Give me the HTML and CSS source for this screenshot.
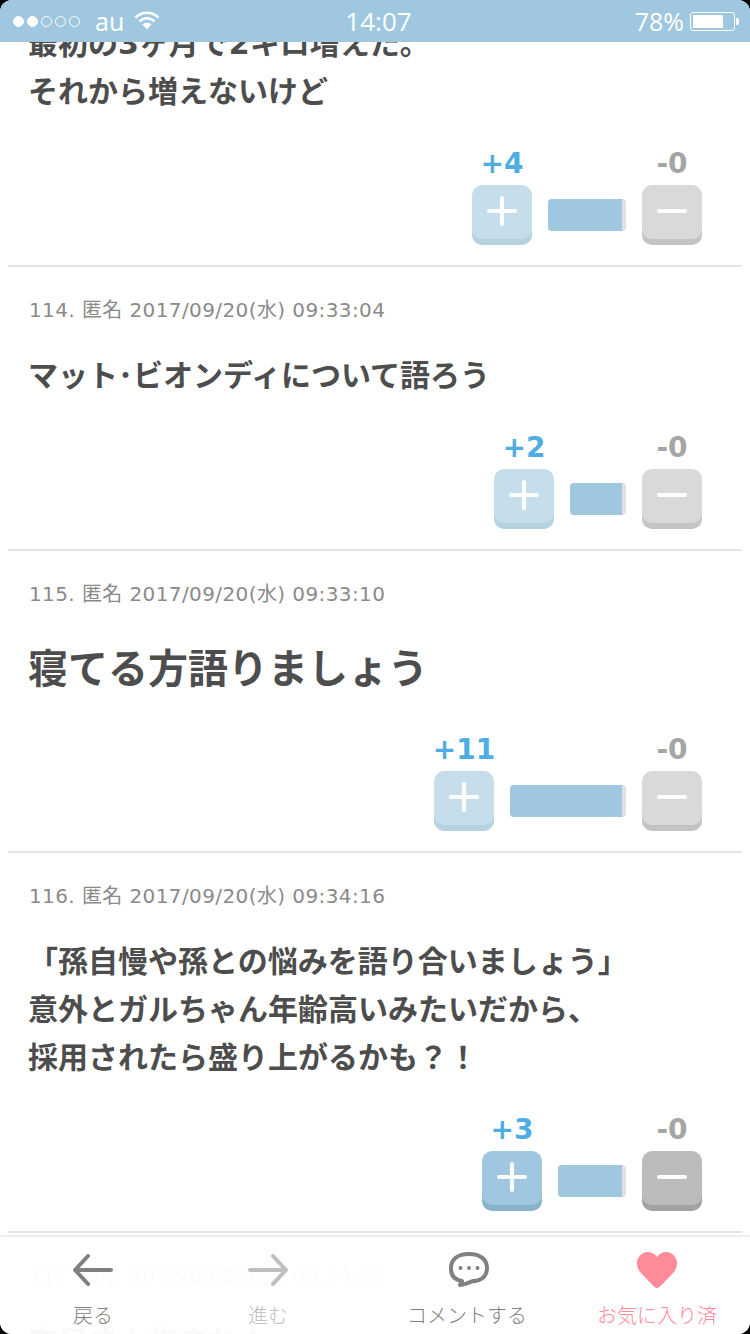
FILE: index.html
```html
<!DOCTYPE html>
<html lang="ja">
<head>
  <meta charset="UTF-8">
  <title>コメント</title>
  <link rel="stylesheet" href="styles.css">
</head>
<body>
<div class="screen">

  <div class="status-bar">
    <div class="status-left">
      <span class="signal">
        <i class="dot on"></i><i class="dot on"></i><i class="dot"></i><i class="dot"></i><i class="dot"></i>
      </span>
      <span class="carrier">au</span>
      <svg class="wifi" width="26" height="20" viewBox="0 0 26 20">
        <path d="M1.5 7.5C8 1 18 1 24.500 7.5" fill="none" stroke="#fff" stroke-width="2.500"/>
        <path d="M5.500 11.500C10 7.200 16 7.200 20.500 11.500" fill="none" stroke="#fff" stroke-width="2.500"/>
        <path d="M13 19.500L8.500 14.500C11 12.300 15 12.300 17.500 14.500Z" fill="#fff"/>
      </svg>
    </div>
    <div class="status-time">14:07</div>
    <div class="status-right">
      <span>78%</span>
      <span class="battery"><span class="battery-level"></span></span>
      <span class="battery-tip"></span>
    </div>
  </div>

  <div class="comments">

    <div class="comment">
      <p class="comment-body">最初の3ヶ月で2キロ増えた。<br>それから増えないけど</p>
      <div class="votes">
        <div class="vote plus">
          <span class="count">+4</span>
          <button class="vote-btn"><svg width="30" height="30" viewBox="0 0 30 30"><path d="M2 15H28M15 2V28" stroke="#fff" stroke-width="4" stroke-linecap="round"/></svg></button>
        </div>
        <div class="bar" style="width:78px"><div class="bar-fill"></div></div>
        <div class="vote minus">
          <span class="count">-0</span>
          <button class="vote-btn"><svg width="30" height="30" viewBox="0 0 30 30"><path d="M2 15H28" stroke="#fff" stroke-width="4" stroke-linecap="round"/></svg></button>
        </div>
      </div>
    </div>

    <div class="comment">
      <div class="comment-meta">114. 匿名 2017/09/20(水) 09:33:04</div>
      <p class="comment-body">マット･ビオンディについて語ろう</p>
      <div class="votes">
        <div class="vote plus">
          <span class="count">+2</span>
          <button class="vote-btn"><svg width="30" height="30" viewBox="0 0 30 30"><path d="M2 15H28M15 2V28" stroke="#fff" stroke-width="4" stroke-linecap="round"/></svg></button>
        </div>
        <div class="bar" style="width:56px"><div class="bar-fill"></div></div>
        <div class="vote minus">
          <span class="count">-0</span>
          <button class="vote-btn"><svg width="30" height="30" viewBox="0 0 30 30"><path d="M2 15H28" stroke="#fff" stroke-width="4" stroke-linecap="round"/></svg></button>
        </div>
      </div>
    </div>

    <div class="comment">
      <div class="comment-meta">115. 匿名 2017/09/20(水) 09:33:10</div>
      <p class="comment-body large">寝てる方語りましょう</p>
      <div class="votes">
        <div class="vote plus">
          <span class="count">+11</span>
          <button class="vote-btn"><svg width="30" height="30" viewBox="0 0 30 30"><path d="M2 15H28M15 2V28" stroke="#fff" stroke-width="4" stroke-linecap="round"/></svg></button>
        </div>
        <div class="bar" style="width:116px"><div class="bar-fill"></div></div>
        <div class="vote minus">
          <span class="count">-0</span>
          <button class="vote-btn"><svg width="30" height="30" viewBox="0 0 30 30"><path d="M2 15H28" stroke="#fff" stroke-width="4" stroke-linecap="round"/></svg></button>
        </div>
      </div>
    </div>

    <div class="comment">
      <div class="comment-meta">116. 匿名 2017/09/20(水) 09:34:16</div>
      <p class="comment-body">「孫自慢や孫との悩みを語り合いましょう」<br>意外とガルちゃん年齢高いみたいだから、<br>採用されたら盛り上がるかも？！</p>
      <div class="votes">
        <div class="vote plus voted">
          <span class="count">+3</span>
          <button class="vote-btn"><svg width="30" height="30" viewBox="0 0 30 30"><path d="M2 15H28M15 2V28" stroke="#fff" stroke-width="4" stroke-linecap="round"/></svg></button>
        </div>
        <div class="bar" style="width:68px"><div class="bar-fill"></div></div>
        <div class="vote minus voted">
          <span class="count">-0</span>
          <button class="vote-btn"><svg width="30" height="30" viewBox="0 0 30 30"><path d="M2 15H28" stroke="#fff" stroke-width="4" stroke-linecap="round"/></svg></button>
        </div>
      </div>
    </div>

    <div class="comment">
      <div class="comment-meta">117. 匿名 2017/09/20(水) 09:34:22</div>
      <p class="comment-body">在日さん集まれ！</p>
    </div>

  </div>

  <div class="tab-bar">
    <div class="tab">
      <svg width="44" height="36" viewBox="0 0 44 36"><path d="M40 18H4M17 4L4 18L17 32" fill="none" stroke="#808080" stroke-width="4" stroke-linecap="round" stroke-linejoin="round"/></svg>
      <span>戻る</span>
    </div>
    <div class="tab disabled">
      <svg width="44" height="36" viewBox="0 0 44 36"><path d="M4 18H40M27 4L40 18L27 32" fill="none" stroke="#808080" stroke-width="4" stroke-linecap="round" stroke-linejoin="round"/></svg>
      <span>進む</span>
    </div>
    <div class="tab">
      <svg width="44" height="36" viewBox="-2 0 44 36"><path d="M13 33L15 29C8 28 4 23.500 4 16.500C4 7.500 10.500 2 22 2C33.500 2 40 7.500 40 16C40 25 33.500 29 25 29.300C21 31 17 32.500 13 33Z" fill="none" stroke="#808080" stroke-width="4" stroke-linejoin="round"/><circle cx="13.500" cy="16" r="2" fill="#808080"/><circle cx="22" cy="16" r="2" fill="#808080"/><circle cx="30.500" cy="16" r="2" fill="#808080"/></svg>
      <span>コメントする</span>
    </div>
    <div class="tab favorite">
      <svg width="44" height="36" viewBox="0 0 44 36"><path d="M22 36C20.500 36 19.500 35 18 33.500L6 21C3.500 18.500 2 15 2 11C2 5 7 0 12.500 0C16.500 0 19.500 1.500 22 5C24.500 1.500 27.500 0 31.500 0C37 0 42 5 42 11C42 15 40.500 18.500 38 21L26 33.500C24.500 35 23.500 36 22 36Z" fill="#ff8b9a"/></svg>
      <span>お気に入り済</span>
    </div>
  </div>

</div>
</body>
</html>
```

FILE: styles.css
```css
html, body {
  margin: 0;
  padding: 0;
  background: #000;
}

.screen {
  position: relative;
  width: 750px;
  height: 1334px;
  overflow: hidden;
  background: #fff;
  border-radius: 12px;
  font-family: "Noto Sans CJK JP", "DejaVu Sans", sans-serif;
}

/* status bar */
.status-bar {
  position: absolute;
  top: 0;
  left: 0;
  right: 0;
  z-index: 2;
  height: 42px;
  background: #9fc8e0;
  color: #fff;
  font-family: "Open Sans", sans-serif;
  font-size: 25px;
  display: flex;
  align-items: center;
  justify-content: space-between;
  padding: 0 11px 0 13px;
  box-sizing: border-box;
}

.status-left, .status-right {
  display: flex;
  align-items: center;
  width: 200px;
}

.status-right {
  justify-content: flex-end;
}

.signal {
  display: flex;
  gap: 3px;
}

.dot {
  width: 11px;
  height: 11px;
  box-sizing: border-box;
  border: 1px solid #fff;
  border-radius: 50%;
}

.dot.on {
  background: #fff;
}

.carrier {
  margin-left: 15px;
}

.wifi {
  margin-left: 10px;
  margin-bottom: 2px;
}

.status-time {
  font-size: 26px;
  margin-left: 5px;
}

.battery {
  display: block;
  width: 45px;
  height: 19px;
  margin-left: 6px;
  padding: 2px;
  box-sizing: border-box;
  border: 1px solid #fff;
  border-radius: 3px;
}

.battery-level {
  display: block;
  width: 78%;
  height: 100%;
  background: #fff;
}

.battery-tip {
  width: 3px;
  height: 7px;
  margin-left: 1px;
  background: #fff;
  border-radius: 0 2px 2px 0;
}

/* comments */
.comments {
  margin-top: -8px;
  padding: 0 8px;
}

.comment {
  border-bottom: 2px solid #e4e4e4;
  padding: 0 40px 20px 21px;
}

.comment:last-child {
  border-bottom: none;
}

.comment-meta {
  height: 28px;
  padding-top: 29px;
  line-height: 28px;
  font-size: 20px;
  letter-spacing: 0.4px;
  color: #8a8a8a;
  font-family: "DejaVu Sans", "Noto Sans CJK JP", sans-serif;
}

.comment-body {
  margin: 28px 0 0 -1px;
  font-family: "DejaVu Sans", "Noto Sans CJK JP", sans-serif;
  font-size: 30px;
  line-height: 48px;
  font-weight: bold;
  color: #4d4d4d;
}

.comment-body.large {
  font-size: 40px;
  line-height: 66px;
}

.votes {
  display: flex;
  justify-content: flex-end;
  align-items: flex-end;
  gap: 16px;
  margin-top: 31px;
}

.vote {
  width: 60px;
  display: flex;
  flex-direction: column;
  align-items: center;
}

.count {
  font-family: "DejaVu Sans", sans-serif;
  font-size: 28px;
  font-weight: bold;
  line-height: 34px;
  margin-bottom: 4px;
  white-space: nowrap;
}

.plus .count {
  color: #4eaee4;
}

.minus .count {
  color: #a5a5a5;
}

.vote-btn {
  width: 60px;
  height: 54px;
  margin-bottom: 6px;
  padding: 0 0 2px;
  border: none;
  border-radius: 10px;
  display: flex;
  align-items: center;
  justify-content: center;
}

.plus .vote-btn {
  background: #c6deeb;
  box-shadow: 0 6px 0 #b5d2e1;
}

.minus .vote-btn {
  background: #d9d9d9;
  box-shadow: 0 6px 0 #c4c4c4;
}

.plus.voted .vote-btn {
  background: #9fc8e0;
  box-shadow: 0 6px 0 #87b3cc;
}

.minus.voted .vote-btn {
  background: #bcbcbc;
  box-shadow: 0 6px 0 #a3a3a3;
}

.bar {
  height: 32px;
  margin-bottom: 14px;
  background: #e0e0e0;
  border-radius: 4px;
  overflow: hidden;
}

.bar-fill {
  height: 100%;
  margin-right: 4px;
  background: #9fc8e0;
}

/* bottom tabs */
.tab-bar {
  position: absolute;
  left: 0;
  right: 0;
  bottom: 0;
  height: 99px;
  padding-top: 15px;
  box-sizing: border-box;
  background: rgba(255, 255, 255, 0.97);
  border-top: 2px solid #eeeeee;
  display: grid;
  grid-template-columns: 186px 164px 234px 146px;
}

.tab {
  display: flex;
  flex-direction: column;
  align-items: center;
  gap: 13px;
  font-size: 20px;
  font-weight: 300;
  line-height: 28px;
  color: #808080;
  white-space: nowrap;
}

.tab.disabled {
  opacity: 0.5;
}

.tab.favorite {
  color: #ff8b9a;
}
```
